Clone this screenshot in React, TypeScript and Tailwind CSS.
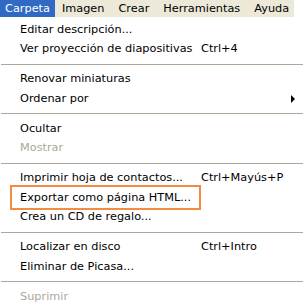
import React from "react";

type Item =
  | { kind: "item"; label: string; shortcut?: string; disabled?: boolean; submenu?: boolean; highlight?: boolean }
  | { kind: "sep" };

const items: Item[] = [
  { kind: "item", label: "Editar descripción..." },
  { kind: "item", label: "Ver proyección de diapositivas", shortcut: "Ctrl+4" },
  { kind: "sep" },
  { kind: "item", label: "Renovar miniaturas" },
  { kind: "item", label: "Ordenar por", submenu: true },
  { kind: "sep" },
  { kind: "item", label: "Ocultar" },
  { kind: "item", label: "Mostrar", disabled: true },
  { kind: "sep" },
  { kind: "item", label: "Imprimir hoja de contactos...", shortcut: "Ctrl+Mayús+P" },
  { kind: "item", label: "Exportar como página HTML...", highlight: true },
  { kind: "item", label: "Crea un CD de regalo..." },
  { kind: "sep" },
  { kind: "item", label: "Localizar en disco", shortcut: "Ctrl+Intro" },
  { kind: "item", label: "Eliminar de Picasa..." },
  { kind: "sep" },
  { kind: "item", label: "Suprimir", disabled: true },
];

const bar = ["Carpeta", "Imagen", "Crear", "Herramientas", "Ayuda"];

export default function App() {
  return (
    <div
      className="w-[304px] h-[303px] bg-white overflow-hidden text-[11.3px] text-black"
      style={{ fontFamily: '"DejaVu Sans", Verdana, sans-serif' }}
    >
      <div className="flex h-[17px] w-[294px] bg-[#ece9d8] leading-[17px]">
        {bar.map((b, i) => (
          <div
            key={b}
            className={
              i === 0
                ? "pl-[5px] pr-[5px] bg-[#316ac5] text-white whitespace-nowrap"
                : "px-[7px] whitespace-nowrap"
            }
          >
            {b}
          </div>
        ))}
      </div>
      <div className="flex flex-col pt-[3px]">
        {items.map((it, i) =>
          it.kind === "sep" ? (
            <div key={i} className="h-[10.5px] flex items-center px-[1px]">
              <div className="h-[1px] w-full bg-[#aca899]" />
            </div>
          ) : (
            <div key={i} className="relative flex items-center h-[19.5px] pl-[20px] leading-[12px]">
              {it.highlight && (
                <div className="absolute left-[10px] top-[-3px] w-[191px] h-[25px] border-2 border-[#f58a42]" />
              )}
              <span className={"w-[181px] whitespace-nowrap " + (it.disabled ? "text-[#aca899]" : "")}>{it.label}</span>
              {it.shortcut && <span className="whitespace-nowrap">{it.shortcut}</span>}
              {it.submenu && (
                <svg className="absolute left-[291px] top-[6px]" width="5" height="8" viewBox="0 0 5 8">
                  <path d="M0 0 L4 4 L0 8 Z" fill="#000" />
                </svg>
              )}
            </div>
          )
        )}
      </div>
    </div>
  );
}
